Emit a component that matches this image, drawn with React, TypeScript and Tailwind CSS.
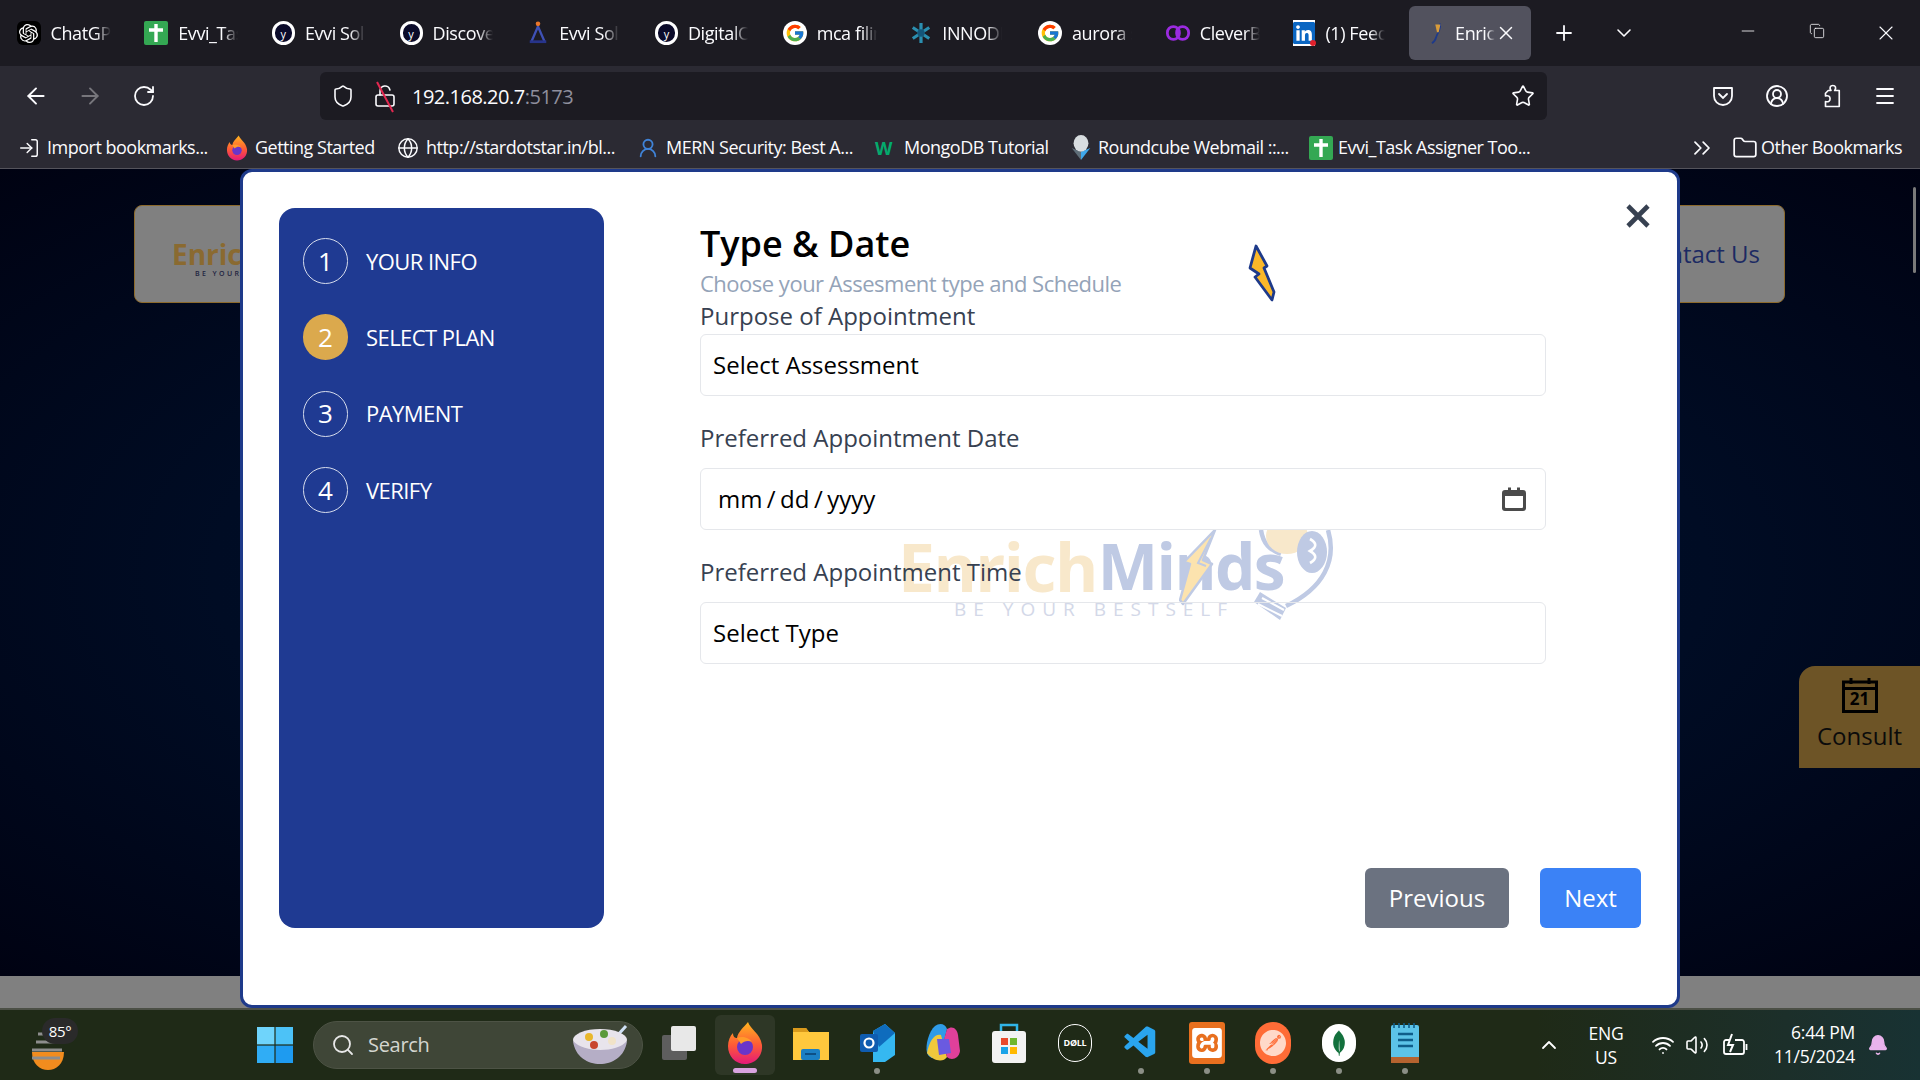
import React from "react";
import { ArrowLeft, ArrowRight, RotateCw, Shield, LockOpen, Star, CircleUserRound, Menu, Folder, Globe, ChevronsRight, Plus, ChevronDown, Minus, Copy, X, LogIn, Search, ChevronUp, Wifi, Volume2, Bell, UserRound } from "lucide-react";
import { FcGoogle } from "react-icons/fc";
import { SiOpenai, SiPostman, SiMongodb, SiXampp } from "react-icons/si";
import { VscVscode } from "react-icons/vsc";
import { FaLinkedin } from "react-icons/fa";

const GreenPlus = () => (
  <svg viewBox="0 0 24 24" className="w-[24px] h-[26px] shrink-0">
    <rect x="0" y="0" width="24" height="24" rx="2" fill="#34a853" />
    <path d="M12 3v18M5 9h14" stroke="#fff" strokeWidth="3.4" />
  </svg>
);
const YLogo = () => (
  <div className="w-[23px] h-[24px] shrink-0 rounded-full bg-[#0b0b2a] border-[3px] border-white flex items-center justify-center text-white text-[11px] leading-none">y</div>
);
const Firefox = () => (
  <svg viewBox="0 0 36 44" className="w-[36px] h-[44px]">
    <defs>
      <linearGradient id="ff" x1="0" y1="0" x2="0" y2="1">
        <stop offset="0" stopColor="#ffb51f" />
        <stop offset="0.55" stopColor="#ff5a36" />
        <stop offset="1" stopColor="#e3197a" />
      </linearGradient>
    </defs>
    <path d="M21 1 C23 8 33 12 35 24 C36 36 27 43 18 43 C8 43 1 35 1 25 C1 20 3 15 6 12 C6 16 8 17 10 17 C11 11 16 7 21 1 Z" fill="url(#ff)" />
    <circle cx="18" cy="26" r="8" fill="#6a35c9" />
    <path d="M10 17 C14 15 22 16 25 21 C21 19 17 20 14 23 Z" fill="#ff9b2a" />
  </svg>
);

const tabs = [
  { label: "ChatGPT", icon: <div className="w-[24px] h-[24px] bg-black rounded-md flex items-center justify-center shrink-0"><SiOpenai className="text-white w-[19px] h-[19px]" /></div> },
  { label: "Evvi_Task", icon: <GreenPlus /> },
  { label: "Evvi Solutions", icon: <YLogo /> },
  { label: "Discover", icon: <YLogo /> },
  { label: "Evvi Solutions", icon: <svg viewBox="0 0 24 26" className="w-[22px] h-[26px] shrink-0"><circle cx="12" cy="3" r="2.5" fill="#e8762b" /><path d="M12 6 L5 22 M12 6 L19 22" stroke="#3f51b5" strokeWidth="2.5" /><rect x="3" y="21" width="18" height="3" fill="#27348b" /></svg> },
  { label: "DigitalOcean", icon: <YLogo /> },
  { label: "mca filing", icon: <div className="w-[24px] h-[24px] rounded-full bg-white flex items-center justify-center shrink-0"><FcGoogle className="w-[20px] h-[20px]" /></div> },
  { label: "INNODEEP", icon: <svg viewBox="0 0 24 24" className="w-[22px] h-[24px] shrink-0"><path d="M12 1v22M3 6l18 12M21 6L3 18" stroke="#2b8fb0" strokeWidth="3.5" /><circle cx="12" cy="12" r="4" fill="#14567a" /></svg> },
  { label: "aurora star", icon: <div className="w-[24px] h-[24px] rounded-full bg-white flex items-center justify-center shrink-0"><FcGoogle className="w-[20px] h-[20px]" /></div> },
  { label: "CleverBooks", icon: <svg viewBox="0 0 26 22" className="w-[24px] h-[22px] shrink-0"><rect x="1.5" y="4" width="13" height="14" rx="6.5" fill="none" stroke="#9b2be0" strokeWidth="3" /><rect x="11.5" y="4" width="13" height="14" rx="6.5" fill="none" stroke="#9b2be0" strokeWidth="3" /></svg> },
  { label: "(1) Feed", icon: <div className="relative w-[22px] h-[26px] shrink-0"><FaLinkedin className="w-[22px] h-[26px] text-[#0a66c2] bg-white" /><div className="absolute -right-[1px] bottom-0 w-[6px] h-[6px] rounded-full bg-[#e0202b]" /></div> },
];

const bookmarks = [
  { label: "Import bookmarks...", w: "w-[179px]", icon: <LogIn className="w-[22px] h-[22px] text-[#fbfbfe]" strokeWidth={1.6} /> },
  { label: "Getting Started", w: "w-[142px]", icon: <div className="w-[22px] h-[26px] [&>svg]:w-[22px] [&>svg]:h-[26px]"><Firefox /></div> },
  { label: "http://stardotstar.in/bl...", w: "w-[211px]", icon: <Globe className="w-[22px] h-[22px] text-[#fbfbfe]" strokeWidth={1.6} /> },
  { label: "MERN Security: Best A...", w: "w-[209px]", icon: <UserRound className="w-[22px] h-[26px] text-[#3f83d8]" strokeWidth={2} /> },
  { label: "MongoDB Tutorial", w: "w-[165px]", icon: <span className="text-[#04aa6d] font-bold text-[18px] leading-none">W</span> },
  { label: "Roundcube Webmail ::...", w: "w-[211px]", icon: <svg viewBox="0 0 24 28" className="w-[24px] h-[26px]"><path d="M2 14 L12 27 L12 18 Z" fill="#5e6d78" /><path d="M22 14 L12 27 L12 18 Z" fill="#3fa7ea" /><ellipse cx="12" cy="9" rx="8" ry="9" fill="#d8dde0" /></svg> },
  { label: "Evvi_Task Assigner Too...", w: "w-[191px]", icon: <GreenPlus /> },
];

const steps = [
  { n: "1", label: "YOUR INFO" },
  { n: "2", label: "SELECT PLAN", active: true },
  { n: "3", label: "PAYMENT" },
  { n: "4", label: "VERIFY" },
];

const dotted = new Set([3, 7, 8, 9, 10, 11]);
const taskIcons = [
  <svg viewBox="0 0 36 36" className="w-[36px] h-[36px]"><rect x="1" y="10" width="25" height="25" rx="2" fill="#5e5e5e" /><rect x="10" y="1" width="25" height="25" rx="2" fill="#e8e8e8" /></svg>,
  <Firefox />,
  <svg viewBox="0 0 38 36" className="w-[38px] h-[36px]"><path d="M1 3 h13 l3 4 h20 v28 h-36 z" fill="#ffc83d" /><path d="M1 3 h13 l3 4 h-16 z" fill="#d99a1c" /><rect x="9" y="24" width="19" height="11" rx="2" fill="#1b7fc4" /><rect x="13" y="28" width="11" height="2" fill="#0d4f85" /></svg>,
  <svg viewBox="0 0 36 40" className="w-[36px] h-[40px]"><path d="M14 8 L26 1 L36 10 V32 L26 39 H14 Z" fill="#35b8f1" /><path d="M14 8 L26 1 L36 10 L20 24 Z" fill="#0f6cbd" /><rect x="1" y="11" width="18" height="18" rx="2" fill="#0f5cb0" /><circle cx="10" cy="20" r="4.5" fill="none" stroke="#fff" strokeWidth="2.2" /></svg>,
  <svg viewBox="0 0 36 40" className="w-[36px] h-[40px]"><path d="M10 3 C14 0 20 0 22 6 L16 30 C12 38 4 36 2 30 C0 22 4 8 10 3Z" fill="#2f9be8" /><path d="M2 30 C4 18 10 10 16 12 L22 34 C18 40 8 38 2 30Z" fill="#f0c83c" /><path d="M22 6 C28 2 32 6 33 12 L35 28 C34 36 26 38 22 34 L18 20Z" fill="#e0409a" /><path d="M12 16 L24 16 L26 30 L14 32Z" fill="#6a5ae0" /></svg>,
  <svg viewBox="0 0 36 42" className="w-[36px] h-[42px]"><path d="M10 10 V3 H26 V10" fill="none" stroke="#30b5e8" strokeWidth="2.5" /><rect x="1" y="9" width="34" height="32" rx="3" fill="#f2f2f2" /><rect x="10" y="16" width="7" height="7" fill="#e8492d" /><rect x="19" y="16" width="7" height="7" fill="#6fb72d" /><rect x="10" y="25" width="7" height="7" fill="#1aa3e8" /><rect x="19" y="25" width="7" height="7" fill="#ffb900" /></svg>,
  <div className="w-[34px] h-[38px] rounded-full border-[1.5px] border-white flex items-center justify-center text-white text-[9px] font-bold tracking-[-0.3px]">DØLL</div>,
  <VscVscode className="w-[38px] h-[40px] text-[#2aa5ee]" />,
  <div className="w-[36px] h-[42px] rounded-[3px] bg-[#e8701f] flex items-center justify-center"><SiXampp className="w-[30px] h-[32px] text-white" /></div>,
  <div className="w-[36px] h-[42px] rounded-full bg-[#ff6c37] flex items-center justify-center"><SiPostman className="w-[26px] h-[26px] text-[#ffd9c9]" /></div>,
  <div className="w-[34px] h-[38px] rounded-full bg-white flex items-center justify-center"><SiMongodb className="w-[26px] h-[28px] text-[#13713d]" /></div>,
  <svg viewBox="0 0 28 42" className="w-[28px] h-[42px]"><rect x="0" y="3" width="28" height="38" rx="2" fill="#5cc3e8" /><rect x="0" y="35" width="28" height="6" fill="#b5632f" /><path d="M3 1v5M8 1v5M13 1v5M18 1v5M23 1v5" stroke="#0f5d8a" strokeWidth="1.6" /><path d="M7 12h15M7 18h15M7 24h15" stroke="#0f5d8a" strokeWidth="2.6" /></svg>,
];

function Field({ label, labelGap, children, className }: { label: string; labelGap: string; children: React.ReactNode; className: string }) {
  return (
    <div className={className}>
      <div className={`h-[30px] flex items-center text-[24px] text-[#374151] relative z-20 ${labelGap}`}>{label}</div>
      {children}
    </div>
  );
}

export default function App() {
  return (
    <div className="w-[1920px] h-[1080px] overflow-hidden flex flex-col font-['Open_Sans',sans-serif]">
      {/* tab strip */}
      <div className="h-[66px] shrink-0 bg-[#1c1b22] flex items-center text-[#fbfbfe] text-[18px]">
        <div className="w-[4.5px] shrink-0" />
        {tabs.map((t, i) => (
          <div key={i} className="w-[127.7px] shrink-0 flex items-center gap-[10px] pl-[12px]">
            {t.icon}
            <span className="w-[60px] overflow-hidden whitespace-nowrap tracking-[-0.4px] [mask-image:linear-gradient(to_right,black_75%,transparent)]">{t.label}</span>
          </div>
        ))}
        <div className="w-[122px] h-[54px] shrink-0 rounded-md bg-[#52525e] flex items-center gap-[12px] pl-[22px]">
          <svg viewBox="0 0 14 26" className="w-[12px] h-[26px] shrink-0"><path d="M10 2 C13 6 8 12 6 18 C5 22 3 24 1 25" fill="none" stroke="#1e3a8a" strokeWidth="2" /><path d="M5 3 L11 3 L9 12 L7 12 Z" fill="#d99c3a" /></svg>
          <span className="w-[40px] overflow-hidden whitespace-nowrap tracking-[-0.4px] [mask-image:linear-gradient(to_right,black_80%,transparent)]">Enrich</span>
          <X className="w-[22px] h-[22px] -ml-[12px] shrink-0" strokeWidth={1.6} />
        </div>
        <div className="w-[66px] shrink-0 flex justify-center"><Plus className="w-[24px] h-[24px]" strokeWidth={1.8} /></div>
        <div className="w-[54px] shrink-0 flex justify-center"><ChevronDown className="w-[24px] h-[24px]" strokeWidth={1.6} /></div>
        <div className="ml-auto flex">
          <div className="w-[68px] flex justify-center"><Minus className="w-[20px] h-[20px]" strokeWidth={1} /></div>
          <div className="w-[69px] flex justify-center"><Copy className="w-[16px] h-[20px]" strokeWidth={1.2} /></div>
          <div className="w-[69px] flex justify-center"><X className="w-[24px] h-[24px]" strokeWidth={1.1} /></div>
        </div>
      </div>

      {/* toolbar */}
      <div className="h-[60px] shrink-0 bg-[#2b2a33] flex items-start text-[#fbfbfe]">
        <div className="h-[60px] flex items-center pl-[9px] w-[320px] shrink-0">
          <div className="w-[54px] flex justify-center"><ArrowLeft className="w-[26px] h-[26px]" strokeWidth={1.8} /></div>
          <div className="w-[54px] flex justify-center"><ArrowRight className="w-[26px] h-[26px] text-[#77767c]" strokeWidth={1.8} /></div>
          <div className="w-[54px] flex justify-center"><RotateCw className="w-[24px] h-[24px]" strokeWidth={1.8} /></div>
        </div>
        <div className="mt-[6px] w-[1227px] h-[48px] shrink-0 rounded-md bg-[#1c1b22] flex items-center pl-[11px] pr-[12px]">
          <Shield className="w-[24px] h-[26px] shrink-0" strokeWidth={1.6} />
          <div className="relative ml-[18px] w-[24px] shrink-0">
            <LockOpen className="w-[24px] h-[26px]" strokeWidth={1.6} />
            <div className="absolute left-[11px] top-[-3px] w-[2px] h-[34px] bg-[#e22850] -rotate-[28deg]" />
          </div>
          <span className="ml-[15px] mt-[2px] text-[20px] tracking-[-0.5px]">192.168.20.7<span className="text-[#8f8f9d]">:5173</span></span>
          <Star className="ml-auto w-[24px] h-[26px]" strokeWidth={1.6} />
        </div>
        <div className="h-[60px] flex-1 flex items-center justify-end pr-[8px]">
          <div className="w-[54px] flex justify-center">
            <svg viewBox="0 0 24 24" className="w-[24px] h-[24px]" fill="none" stroke="#fbfbfe" strokeWidth="1.8"><path d="M3 4h18v8a9 9 0 0 1-18 0z" strokeLinejoin="round" /><path d="M8 10l4 4 4-4" strokeLinecap="round" /></svg>
          </div>
          <div className="w-[54px] flex justify-center"><CircleUserRound className="w-[24px] h-[26px]" strokeWidth={1.8} /></div>
          <div className="w-[54px] flex justify-center">
            <svg viewBox="0 0 24 26" className="w-[22px] h-[28px]" fill="none" stroke="#fbfbfe" strokeWidth="1.8" strokeLinejoin="round">
              <path d="M9 7 H12 C10 4 11 1.5 14 1.5 C17 1.5 18 4 16 7 H21 V24.5 H6 V19 C9 20 11 18.5 11 16 C11 13.5 9 12 6 13 V10 Z" />
            </svg>
          </div>
          <div className="w-[54px] flex justify-center"><Menu className="w-[24px] h-[24px]" strokeWidth={1.8} /></div>
        </div>
      </div>

      {/* bookmarks */}
      <div className="h-[43px] shrink-0 bg-[#2b2a33] border-b border-[#55545c] flex items-start pl-[18px] pt-[1px] text-[#fbfbfe] text-[18px] tracking-[-0.5px]">
        <div className="flex items-center h-[41px]">
          {bookmarks.map((b, i) => (
            <div key={i} className="flex items-center shrink-0">
              <div className="w-[29px] flex items-center shrink-0">{b.icon}</div>
              <span className={`${b.w} whitespace-nowrap`}>{b.label}</span>
            </div>
          ))}
        </div>
        <div className="ml-auto flex items-center h-[41px] pr-[18px]">
          <ChevronsRight className="w-[28px] h-[28px] mr-[16px]" strokeWidth={1.5} />
          <Folder className="w-[26px] h-[26px] mr-[3px]" strokeWidth={1.6} />
          <span className="whitespace-nowrap">Other Bookmarks</span>
        </div>
      </div>

      {/* page */}
      <div className="relative flex-1 min-h-0 flex flex-col">
        <div className="flex-1 bg-[radial-gradient(ellipse_at_center,#01122c_0%,#000c24_55%,#000212_100%)] pt-[36px] pl-[134px]">
          <div className="w-[1651px] flex justify-between">
            <div className="w-[300px] h-[98px] rounded-lg bg-[#808080] border border-[#8c6a2c] pl-[37px] pt-[32px]">
              <div className="text-[28px] leading-[32px] font-bold text-[#8a6a30]">EnrichMinds</div>
              <div className="ml-[23px] -mt-[1px] text-[7px] font-semibold tracking-[2.4px] text-[#1f2440]">BE YOUR BESTSELF</div>
            </div>
            <div className="w-[300px] h-[98px] rounded-lg bg-[#808080] border border-[#8c6a2c] flex items-center justify-end pr-[24px]">
              <span className="text-[24px] text-[#1c2a63]">Contact Us</span>
            </div>
          </div>
        </div>
        <div className="h-[32px] shrink-0 bg-[#808080]" />

        {/* scrollbar */}
        <div className="absolute right-[4px] top-[18px] w-[3px] h-[86px] rounded bg-[#7a7a7a]" />

        {/* consult */}
        <div className="absolute right-0 top-[497px] w-[121px] h-[102px] rounded-tl-2xl bg-[#6d5426] flex flex-col items-center pt-[11px] text-[#0b0b0b]">
          <svg viewBox="0 0 36 36" className="w-[36px] h-[36px]">
            <path d="M1.5 5h33v29.5h-33z M1.5 11.5h33" fill="none" stroke="#000" strokeWidth="3" />
            <path d="M9 1v6M27 1v6" stroke="#000" strokeWidth="3" />
          </svg>
          <span className="-mt-[25px] h-[22px] text-[17px] font-bold leading-[22px] text-black">21</span>
          <span className="mt-[11px] text-[24px] leading-[30px]">Consult</span>
        </div>

        {/* modal */}
        <div className="absolute left-[240px] top-[0px] w-[1440px] h-[839px] rounded-xl bg-white border-[3px] border-[#1e3a8a] flex pl-[36px] pt-[36px] text-black">
          <div className="w-[325px] h-[720px] shrink-0 rounded-2xl bg-[#1f3a92] text-white pl-[24px] pt-[30px] flex flex-col gap-[30.4px]">
            {steps.map((s) => (
              <div key={s.n} className="flex items-center gap-[18px] h-[46px]">
                <div className={`w-[45px] h-[46px] rounded-full flex items-center justify-center text-[26px] ${s.active ? "bg-[#dba94d]" : "border border-[#d6dcec]"}`}>{s.n}</div>
                <span className="text-[22px] tracking-[-0.55px]">{s.label}</span>
              </div>
            ))}
          </div>

          <div className="relative ml-[96px] w-[941px] h-[720px] flex flex-col">
            {/* watermark */}
            <div className="absolute left-[198px] top-[318px] w-[440px] h-[104px] select-none pointer-events-none">
              <div className="flex items-start text-[66px] leading-[80px] font-bold tracking-[-1.5px]">
                <span className="text-[#f8e8cb]">Enrich</span>
                <span className="ml-[1px] text-[64px] tracking-[-1.6px] text-[#bfcae4]">Minds</span>
              </div>
              <svg viewBox="0 0 38 76" className="absolute left-[281px] top-[4px] w-[38px] h-[76px]">
                <path d="M36 0 L24 30 L33 34 L4 74 L1 70 L11 34 L5 32 Z" fill="#fce3ae" stroke="#bfcae4" strokeWidth="2.5" strokeLinejoin="round" />
                <path d="M32 8 L19 33 L27 36" fill="none" stroke="#bfcae4" strokeWidth="2" />
              </svg>
              <svg viewBox="0 0 82 92" className="absolute left-[354px] top-[4px] w-[82px] h-[92px]">
                <path d="M9 0 C11 14 18 20 29 24" fill="none" stroke="#bfcae4" strokeWidth="4.5" />
                <ellipse cx="35" cy="6" rx="21" ry="18" fill="#f8e8cb" />
                <ellipse cx="60" cy="22" rx="15" ry="21" fill="#bfcae4" />
                <path d="M58 9 c7 4 7 8 0 12 c7 4 7 8 0 12" fill="none" stroke="#fff" strokeWidth="2.6" />
                <path d="M76 0 C85 30 72 58 34 76" fill="none" stroke="#bfcae4" strokeWidth="4.5" />
                <path d="M2 72 L28 90 L34 78 L8 62 Z" fill="#bfcae4" />
                <path d="M6 74 L30 86 M10 68 L32 80" stroke="#fff" strokeWidth="2" />
              </svg>
              <div className="absolute left-[56px] top-[71px] text-[19px] leading-[24px] tracking-[7px] whitespace-nowrap text-[#d3d8e8]">BE YOUR BESTSELF</div>
            </div>

            <h2 className="relative mt-[16px] h-[40px] leading-[40px] text-[36px] font-semibold">Type &amp; Date</h2>
            <p className="relative mt-[4px] h-[30px] leading-[30px] text-[22px] tracking-[-0.5px] text-[#94a3b8]">Choose your Assesment type and Schedule</p>
            <Field label="Purpose of Appointment" labelGap="mt-[3px] mb-[3px]" className="w-[846px]">
              <div className="h-[62px] rounded-md border border-[#e5e7eb] bg-white flex items-center pl-[12px] text-[24px]">Select Assessment</div>
            </Field>
            <Field label="Preferred Appointment Date" labelGap="mt-[27px] mb-[15px]" className="w-[846px]">
              <div className="relative z-10 h-[62px] rounded-md border border-[#e5e7eb] bg-white flex items-center pl-[17px] pr-[19px] text-[24px] [word-spacing:-1.8px]">
                mm / dd / yyyy
                <svg viewBox="0 0 24 24" className="ml-auto w-[24px] h-[24px]">
                  <path d="M3 3h3V0.5h3V3h6V0.5h3V3h3a3 3 0 0 1 3 3v15a3 3 0 0 1-3 3H3a3 3 0 0 1-3-3V6a3 3 0 0 1 3-3z M3 9v11a1 1 0 0 0 1 1h16a1 1 0 0 0 1-1V9z" fill="#4b4b4b" fillRule="evenodd" />
                </svg>
              </div>
            </Field>
            <Field label="Preferred Appointment Time" labelGap="mt-[27px] mb-[15px]" className="w-[846px]">
              <div className="relative h-[62px] rounded-md border border-[#e5e7eb] flex items-center pl-[12px] text-[24px]">Select Type</div>
            </Field>

            <div className="mt-auto self-end flex gap-[31px] text-white text-[24px]">
              <button className="w-[144px] h-[60px] rounded-md bg-[#6b7280]">Previous</button>
              <button className="w-[101px] h-[60px] rounded-md bg-[#3b82f6]">Next</button>
            </div>
          </div>

          <svg viewBox="0 0 24 24" className="absolute right-[27px] top-[32px] w-[24px] h-[24px]">
            <path d="M2 2 L22 22 M22 2 L2 22" stroke="#374151" strokeWidth="4.6" />
          </svg>

          <svg viewBox="0 0 28 58" className="absolute left-[1005px] top-[72px] w-[28px] h-[58px]">
            <path d="M8 2 L19 22 L16 24 L26 48 L24 56 L7 33 L11 30 L2 24 Z" fill="#fbb829" stroke="#1e3a8a" strokeWidth="2.8" strokeLinejoin="round" />
          </svg>
        </div>
      </div>

      {/* taskbar */}
      <div className="h-[72px] shrink-0 border-t-2 border-[#4c5046] bg-[linear-gradient(90deg,#1f2a17_0%,#1f2a17_80%,#1c2f2a_93%,#183233_100%)] flex items-center text-white relative">
        <div className="w-[257px] shrink-0 pl-[30px] relative h-full flex items-center">
          <svg viewBox="0 0 36 44" className="w-[36px] h-[44px] mt-[10px]">
            <path d="M2 24 H34 C34 36 26 42 18 42 C10 42 2 36 2 24Z" fill="#f28c1e" />
            <path d="M8 6h8M6 14h22M2 22h30M2 30h28" stroke="#8d8d8d" strokeWidth="3.2" />
          </svg>
          <div className="absolute left-[42px] top-[8px] w-[36px] h-[26px] rounded-full bg-[#2a2a2a] flex items-center justify-center text-[15px] tracking-[-0.3px]">85°</div>
        </div>
        <svg viewBox="0 0 36 36" className="w-[36px] h-[36px] shrink-0">
          <rect x="0" y="0" width="17.4" height="17.4" fill="#6fd4fb" />
          <rect x="18.6" y="0" width="17.4" height="17.4" fill="#4cc2f7" />
          <rect x="0" y="18.6" width="17.4" height="17.4" fill="#30adf5" />
          <rect x="18.6" y="18.6" width="17.4" height="17.4" fill="#1e9bf0" />
        </svg>
        <div className="ml-[20px] w-[330px] h-[48px] shrink-0 rounded-full bg-[#3f4637] border border-[#4d5345] flex items-center pl-[17px] pr-[14px]">
          <Search className="w-[24px] h-[26px] text-[#e8e8e8]" strokeWidth={1.8} />
          <span className="ml-[13px] text-[20px] tracking-[-0.3px] text-[#d4d6d0]">Search</span>
          <svg viewBox="0 0 56 40" className="ml-auto w-[56px] h-[42px]">
            <path d="M44 12 L54 1" stroke="#cfe0f5" strokeWidth="3" />
            <ellipse cx="28" cy="15" rx="27" ry="11" fill="#e8e4ec" />
            <path d="M1 16 C3 32 16 39 28 39 C40 39 53 32 55 16 C45 28 12 28 1 16Z" fill="#b5aec6" />
            <circle cx="17" cy="12" r="4" fill="#e8b72c" /><circle cx="32" cy="9" r="4" fill="#5b9a3a" />
            <circle cx="22" cy="20" r="4" fill="#c8452e" /><circle cx="40" cy="16" r="4" fill="#f1e3c8" />
          </svg>
        </div>
        <div className="ml-[3px] flex shrink-0 h-full">
          {taskIcons.map((ic, i) => (
            <div key={i} className="relative w-[66px] h-full flex items-center justify-center">
              {i === 1 && <div className="absolute left-[3px] top-[5px] w-[60px] h-[60px] rounded-md bg-[#2e3726]" />}
              <div className="relative -mt-[5px] flex">{ic}</div>
              {i === 1 && <div className="absolute left-[21px] bottom-[7px] w-[24px] h-[5px] rounded-full bg-[#d9a3e0]" />}
              {dotted.has(i) && <div className="absolute left-[30px] bottom-[6px] w-[6px] h-[6px] rounded-full bg-[#8b8f86]" />}
            </div>
          ))}
        </div>
        <div className="ml-auto flex items-center h-full text-[17.5px] tracking-[-0.2px]">
          <ChevronUp className="w-[24px] h-[24px] mr-[25px]" strokeWidth={1.8} />
          <div className="w-[40px] text-center leading-[24px] mr-[25px]">ENG<br />US</div>
          <Wifi className="w-[24px] h-[24px] mr-[10px]" strokeWidth={1.8} />
          <Volume2 className="w-[24px] h-[24px] mr-[13px]" strokeWidth={1.6} />
          <svg viewBox="0 0 26 26" className="w-[26px] h-[26px] mr-[26px]" fill="none" stroke="#fff" strokeWidth="1.8">
            <path d="M7 8H4a2 2 0 0 0-2 2v10a2 2 0 0 0 2 2h16a2 2 0 0 0 2-2V10a2 2 0 0 0-2-2h-7" />
            <path d="M24.5 12v6" />
            <path d="M10 2 L6 13 H11 L8 20" strokeWidth="2" />
          </svg>
          <div className="text-right leading-[24px] mr-[12px] -mt-[3px]">6:44 PM<br />11/5/2024</div>
          <Bell className="w-[22px] h-[28px] mr-[31px] text-[#e9b3ec] fill-[#e9b3ec]" strokeWidth={1.6} />
        </div>
      </div>
    </div>
  );
}
